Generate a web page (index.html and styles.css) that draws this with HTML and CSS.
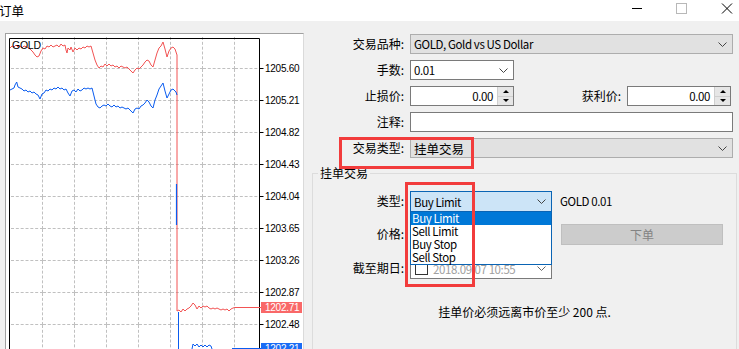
FILE: index.html
```html
<!DOCTYPE html>
<html lang="zh-CN">
  <head>
    <meta charset="UTF-8" />
    <meta name="viewport" content="width=device-width, initial-scale=1.0" />
    <title>订单</title>
    <link rel="stylesheet" href="styles.css">
  </head>
  <body>
    <header class="titlebar">
      <span class="title">订单</span>
      <svg class="controls" width="110" height="21" viewBox="629 0 110 21">
        <line x1="632" y1="8.5" x2="642" y2="8.5" stroke="#000" />
        <rect x="676.5" y="3.5" width="10" height="10" fill="none" stroke="#b8b8b8" />
        <path d="M722 3.5 L732 13.5 M732 3.5 L722 13.5" stroke="#000" fill="none" />
      </svg>
    </header>

    <div class="window">
      <div class="chart">
        <div class="plot-grid">
          <span></span><span></span><span></span><span></span><span></span><span></span><span></span><span></span>
          <span></span><span></span><span></span><span></span><span></span><span></span><span></span><span></span>
          <span></span><span></span><span></span><span></span><span></span><span></span><span></span><span></span>
          <span></span><span></span><span></span><span></span><span></span><span></span><span></span><span></span>
          <span></span><span></span><span></span><span></span><span></span><span></span><span></span><span></span>
          <span></span><span></span><span></span><span></span><span></span><span></span><span></span><span></span>
          <span></span><span></span><span></span><span></span><span></span><span></span><span></span><span></span>
          <span></span><span></span><span></span><span></span><span></span><span></span><span></span><span></span>
          <span></span><span></span><span></span><span></span><span></span><span></span><span></span><span></span>
          <span></span><span></span><span></span><span></span><span></span><span></span><span></span><span></span>
        </div>
        <svg class="plot" width="297" height="315" viewBox="6 34 297 315">
          <path d="M9.5 349V38.5H259.5V349" stroke="#000" fill="none" />
          <path d="M259.5 68.5h4 M259.5 100.5h4 M259.5 132.5h4 M259.5 164.5h4 M259.5 196.5h4 M259.5 228.5h4 M259.5 260.5h4 M259.5 292.5h4 M259.5 324.5h4" stroke="#000" fill="none" />

          <polyline fill="none" stroke="#f25353" points="10,48 12,46 14,47 16,45 18,47 20,46 22,48 24,46 27,47 30,49 33,52 35,55 37,57 39,56 41,51 43,48 45,49 47,46 49,47 51,45 53,47 55,46 57,45 59,47 61,44 63,46 65,45 66,50 67,53 68,48 70,50 71,47 73,52 75,48 77,50 79,48 81,49 83,47 85,48 87,46 89,47 91,46 93,53 95,60 97,65 99,68 101,66 103,67 105,64 107,66 109,64 111,66 113,65 115,67 117,66 119,68 121,66 123,67 125,68 127,67 129,69 131,71 133,73 135,70 137,68 139,69 141,67 143,65 145,62 147,60 149,61 151,65 153,67 155,60 157,53 159,48 161,46 163,42 165,49 167,57 169,51 171,48 173,47 175,49 176,52 177,55 177,311 179,310 181,312 183,309 185,311 187,309 189,308 191,306 193,303 195,305 197,309 199,306 201,308 203,306 205,307 207,306 209,308 211,309 213,308 215,309 217,308 219,309 221,310 223,309 225,310 227,309 229,311 231,309 233,308 235,307.5 261,307.5" />

          <polyline fill="none" stroke="#0a5cf0" points="10,90 12,89 14,88 15,85 16.7,82 18,87 20,88 22,89 24,91 26,90 28,92 30,91 32,93 34,92 36,94 38,95 40,99 42,94 44,93 46,90 48,91 50,89 52,90 54,88 56,89 58,87 60,89 62,88 64,90 66,89 68,93 70,96 72,91 74,90 76,92 78,89 80,91 82,90 84,88 86,89 88,88 90,89 92,88 94,96 96,104 98,107 100,108 102,106 104,105 106,106 108,104 110,106 112,107 114,105 116,107 118,106 120,108 122,107 124,108 126,109 128,108 130,110 132,112 133,113 135,109 137,108 139,109 141,106 143,105 145,103 147,100 149,102 151,106 153,108 155,100 157,95 159,89 161,86 163,83 165,91 167,98 169,94 171,90 173,89 175,91 176,92 177,95" />
          <path d="M176.5 184V225" stroke="#0a5cf0" stroke-width="1.2" />
          <polyline fill="none" stroke="#0a5cf0" points="178.5,312 178.5,349" />
          <polyline fill="none" stroke="#0a5cf0" points="192,349 193,344 195,346 197,344 199,347 201,345 203,347 205,345 207,347 209,345 211,346 212,349" />
          <path d="M232 348.5H261" stroke="#0a5cf0" />

          <g class="axis">
            <text x="265" y="72">1205.60</text>
            <text x="265" y="104">1205.21</text>
            <text x="265" y="136">1204.82</text>
            <text x="265" y="168">1204.43</text>
            <text x="265" y="200">1204.04</text>
            <text x="265" y="232">1203.65</text>
            <text x="265" y="264">1203.26</text>
            <text x="265" y="296">1202.87</text>
            <text x="265" y="328">1202.48</text>
          </g>
          <rect x="261" y="302" width="41" height="11" fill="#f96868" />
          <text class="axis tag" x="265" y="311">1202.71</text>
          <rect x="261" y="343" width="41" height="11" fill="#1a6cf5" />
          <text class="axis tag" x="265" y="352">1202.21</text>
          <text class="axis symbol-tag" x="12" y="49">GOLD</text>
        </svg>
      </div>

      <div class="form">
        <div class="fields">
          <span class="lbl">交易品种:</span>
          <div class="select gray">
            <span class="latin">GOLD, Gold vs US Dollar</span>
            <svg class="chev" width="9" height="5" viewBox="0 0 9 5"><polyline points="0.5,0.5 4.5,4.5 8.5,0.5" fill="none" stroke="#444" /></svg>
          </div>

          <span class="lbl">手数:</span>
          <div class="select white lots">
            <span class="latin">0.01</span>
            <svg class="chev" width="9" height="5" viewBox="0 0 9 5"><polyline points="0.5,0.5 4.5,4.5 8.5,0.5" fill="none" stroke="#444" /></svg>
          </div>

          <span class="lbl">止损价:</span>
          <div class="pair">
            <div class="spin">
              <span class="val latin">0.00</span>
              <span class="btns"><span class="up"></span><span class="down"></span></span>
            </div>
            <span class="lbl pair-lbl">获利价:</span>
            <div class="spin">
              <span class="val latin">0.00</span>
              <span class="btns"><span class="up"></span><span class="down"></span></span>
            </div>
          </div>

          <span class="lbl">注释:</span>
          <div class="input"></div>

          <span class="lbl">交易类型:</span>
          <div class="select gray">
            <span class="cjk">挂单交易</span>
            <svg class="chev" width="9" height="5" viewBox="0 0 9 5"><polyline points="0.5,0.5 4.5,4.5 8.5,0.5" fill="none" stroke="#444" /></svg>
          </div>
        </div>

        <fieldset class="group">
          <legend>挂单交易</legend>
          <div class="pending">
            <span class="lbl">类型:</span>
            <div class="select open">
              <span class="latin">Buy Limit</span>
              <svg class="chev" width="9" height="5" viewBox="0 0 9 5"><polyline points="0.5,0.5 4.5,4.5 8.5,0.5" fill="none" stroke="#444" /></svg>
              <ul class="list latin">
                <li class="active">Buy Limit</li>
                <li>Sell Limit</li>
                <li>Buy Stop</li>
                <li>Sell Stop</li>
              </ul>
            </div>
            <span class="symbol latin">GOLD 0.01</span>

            <span class="lbl">价格:</span>
            <div class="input"></div>
            <button class="place" disabled>下单</button>

            <span class="lbl">截至期日:</span>
            <div class="select white date">
              <span class="check"></span>
              <span class="muted latin">2018.09.07 10:55</span>
              <svg class="chev" width="9" height="5" viewBox="0 0 9 5"><polyline points="0.5,0.5 4.5,4.5 8.5,0.5" fill="none" stroke="#666" /></svg>
            </div>
            <span></span>
          </div>
          <p class="note">挂单价必须远离市价至少 200 点.</p>
        </fieldset>
      </div>
    </div>

    <div class="mark mark-type"></div>
    <div class="mark mark-list"></div>
  </body>
</html>
```

FILE: styles.css
```css
* {
  box-sizing: border-box;
}

body {
  margin: 0;
  width: 739px;
  height: 349px;
  overflow: hidden;
  position: relative;
  background: #f0f0f0;
  font-family: "Noto Sans CJK SC", sans-serif;
  font-size: 12px;
  color: #000;
}

.latin {
  font-size: 11.5px;
  letter-spacing: -0.4px;
}

.titlebar {
  height: 21px;
  background: #fff;
  display: flex;
  align-items: center;
}
.title {
  line-height: 16px;
  font-size: 12.5px;
  margin-left: -1px;
}
.controls {
  margin-left: auto;
  display: block;
}

.window {
  display: flex;
  align-items: flex-start;
  height: 328px;
}

.chart {
  position: relative;
  margin: 12px 0 0 5px;
  width: 299px;
  height: 316px;
  background: #fff;
  border: 1px solid #a0a0a0;
  border-right-color: #dadada;
  border-bottom: none;
}

/* dashed grid behind the plot, cells 32px */
.plot-grid {
  position: absolute;
  left: 5px;
  top: 3px;
  width: 248px;
  height: 312px;
  overflow: hidden;
  display: grid;
  grid-template-columns: repeat(8, 32px);
  grid-auto-rows: 32px;
}
.plot-grid span {
  border-right: 1px dashed #c0c0c0;
  border-bottom: 1px dashed #c0c0c0;
}

.plot {
  position: relative;
  display: block;
}
.axis {
  font-family: "Liberation Sans", sans-serif;
  font-size: 10px;
  letter-spacing: -0.25px;
  fill: #000;
}
.tag {
  fill: #fff;
}
.symbol-tag {
  font-size: 10.5px;
}

.form {
  flex: 1;
  padding-top: 13px;
}

.fields {
  display: grid;
  grid-template-columns: 100px 1fr;
  grid-auto-rows: 20px;
  column-gap: 6px;
  row-gap: 6px;
  padding-right: 6px;
}

.lbl {
  text-align: right;
  line-height: 20px;
  white-space: nowrap;
}

.select {
  display: flex;
  align-items: center;
  height: 100%;
  padding: 0 5px 0 3px;
  border: 1px solid #adadad;
  white-space: nowrap;
}
.select .chev {
  margin-left: auto;
  flex: none;
}
.gray {
  background: #e1e1e1;
}
.white {
  background: #fff;
  border-color: #7a7a7a;
}
.lots {
  width: 104px;
}
.cjk {
  font-size: 12.5px;
}

.input {
  height: 100%;
  background: #fff;
  border: 1px solid #7a7a7a;
}

.pair {
  display: flex;
  align-items: center;
  padding-right: 2px;
}
.pair-lbl {
  flex: 1;
  padding-right: 6px;
}

.spin {
  display: flex;
  width: 104px;
  height: 20px;
  background: #fff;
  border: 1px solid #7a7a7a;
}
.spin .val {
  flex: 1;
  text-align: right;
  padding-right: 4px;
  line-height: 18px;
}
.btns {
  width: 16px;
  display: flex;
  flex-direction: column;
  background: #e6e6e6;
  border-left: 1px solid #cfcfcf;
}
.btns span {
  flex: 1;
  display: flex;
  align-items: center;
  justify-content: center;
}
.btns .up {
  border-bottom: 1px solid #cfcfcf;
}
.btns .up::after {
  content: "";
  border-left: 3px solid transparent;
  border-right: 3px solid transparent;
  border-bottom: 3px solid #000;
}
.btns .down::after {
  content: "";
  border-left: 3px solid transparent;
  border-right: 3px solid transparent;
  border-top: 3px solid #000;
}

.group {
  margin: 7px 2px 0 8px;
  padding: 10px 0 0 0;
  height: 200px;
  min-width: 0;
  border: 1px solid #dcdcdc;
  border-bottom: none;
}
.group legend {
  margin-left: 5px;
  padding: 0 2px;
  line-height: 16px;
}

.pending {
  display: grid;
  grid-template-columns: 91px 142px 1fr;
  grid-template-rows: 21px 22px 21px;
  column-gap: 6px;
  row-gap: 12px;
}

.open {
  position: relative;
  background: #cce4f7;
  border-color: #0a64b4;
}

.list {
  position: absolute;
  top: 100%;
  left: -1px;
  width: 142px;
  margin: 0;
  padding: 0;
  list-style: none;
  background: #fff;
  border: 1px solid #0a64b4;
  z-index: 2;
}
.list li {
  height: 13px;
  line-height: 13px;
  padding-left: 1px;
}
.list .active {
  background: #0078d7;
  color: #fff;
}

.symbol {
  line-height: 21px;
  padding-left: 2px;
}

.place {
  margin-left: 3px;
  width: 162px;
  height: 21px;
  padding: 0;
  background: #cccccc;
  border: 1px solid #bfbfbf;
  color: #838383;
  font: inherit;
}

.date {
  padding-left: 4px;
}
.check {
  width: 13px;
  height: 13px;
  border: 1px solid #333;
  background: #fff;
  margin-right: 5px;
  flex: none;
}
.muted {
  color: #a0a0a0;
}

.note {
  margin: 25px 0 0;
  line-height: 16px;
  text-align: center;
}

.mark {
  position: absolute;
  border: 3px solid #f23c3c;
  z-index: 5;
}
.mark-type {
  left: 339px;
  top: 137px;
  width: 135px;
  height: 32px;
}
.mark-list {
  left: 405px;
  top: 182px;
  width: 70px;
  height: 105px;
}
```
